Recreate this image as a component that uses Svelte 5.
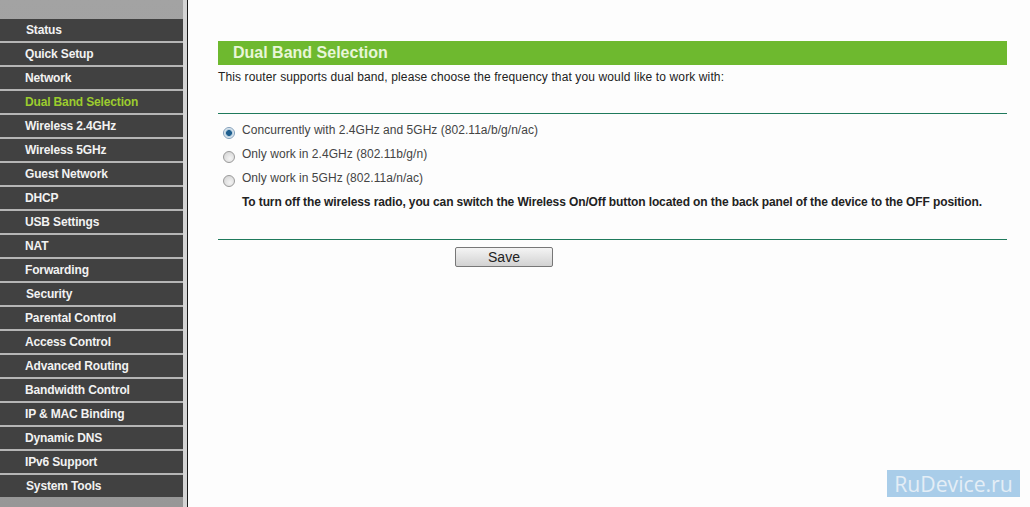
<script lang="ts">
  const menu = [
    { label: 'Status', inset: 26 },
    { label: 'Quick Setup' },
    { label: 'Network' },
    { label: 'Dual Band Selection', active: true },
    { label: 'Wireless 2.4GHz' },
    { label: 'Wireless 5GHz' },
    { label: 'Guest Network' },
    { label: 'DHCP' },
    { label: 'USB Settings' },
    { label: 'NAT' },
    { label: 'Forwarding' },
    { label: 'Security', inset: 26 },
    { label: 'Parental Control' },
    { label: 'Access Control' },
    { label: 'Advanced Routing' },
    { label: 'Bandwidth Control' },
    { label: 'IP & MAC Binding' },
    { label: 'Dynamic DNS' },
    { label: 'IPv6 Support' },
    { label: 'System Tools', inset: 26 }
  ]

  const bands = [
    { label: 'Concurrently with 2.4GHz and 5GHz (802.11a/b/g/n/ac)', checked: true },
    { label: 'Only work in 2.4GHz (802.11b/g/n)', checked: false },
    { label: 'Only work in 5GHz (802.11a/n/ac)', checked: false }
  ]
</script>

<div class="page">
  <nav class="sidebar">
    <ul>
      {#each menu as item}
        <li class:active={item.active} class:inset={item.inset}>{item.label}</li>
      {/each}
    </ul>
  </nav>

  <main class="content">
    <h1>Dual Band Selection</h1>
    <p class="intro">This router supports dual band, please choose the frequency that you would like to work with:</p>
    <hr class="rule-top" />
    <div class="options">
      {#each bands as band}
        <div class="option">
          <span class="radio" class:checked={band.checked}></span>
          <span>{band.label}</span>
        </div>
      {/each}
      <p class="note">To turn off the wireless radio, you can switch the Wireless On/Off button located on the back panel of the device to the OFF position.</p>
    </div>
    <hr class="rule-bottom" />
    <button class="save">Save</button>
  </main>

  <div class="watermark">RuDevice.ru</div>
</div>

<style>
  :global(body) {
    margin: 0;
    background: #fdfdfd;
  }

  .page {
    position: relative;
    display: flex;
    height: 507px;
    overflow: hidden;
    font-family: "Liberation Sans", Arial, sans-serif;
  }

  .sidebar {
    width: 187px;
    flex-shrink: 0;
    box-sizing: border-box;
    padding-top: 19px;
    background: linear-gradient(#a3a3a3, #979797);
    border-right: 4px solid #d4d4d4;
    box-shadow: 1px 0 0 #1a1a1a;
  }

  ul {
    list-style: none;
    margin: 0;
    padding: 0;
  }

  li {
    height: 22px;
    line-height: 22px;
    margin-bottom: 2px;
    padding-left: 25px;
    background: #414141;
    color: #f2f2f2;
    font-size: 12px;
    font-weight: bold;
    letter-spacing: -0.15px;
    box-shadow: 0 1px 0 #b5b5b5, 0 2px 0 #b5b5b5;
  }

  li.inset { padding-left: 26px; }
  li.active { color: #9ccc2e; }
  li:last-child { box-shadow: none; }

  .content {
    flex: 1;
    padding: 41px 23px 0 31px;
    font-size: 12px;
    color: #333;
  }

  h1 {
    margin: 0;
    height: 24px;
    line-height: 24px;
    padding-left: 15px;
    background: #6eb92f;
    color: #e8f6d8;
    font-size: 16px;
    font-weight: bold;
  }

  .intro {
    margin: 5px 0 0;
    line-height: 14px;
    color: #222;
    letter-spacing: 0.12px;
  }

  hr {
    height: 1px;
    margin: 0;
    border: 0;
    background: #1f7a5c;
  }

  .rule-top { margin-top: 29px; }

  .options { padding-top: 4px; }

  .option {
    display: flex;
    align-items: center;
    height: 24px;
    color: #444;
    letter-spacing: 0.04px;
  }

  .radio {
    position: relative;
    width: 12px;
    height: 12px;
    box-sizing: border-box;
    margin: 5px 7px 0 5px;
    border: 1px solid #9a9a9a;
    border-radius: 50%;
    background: radial-gradient(circle at 60% 65%, #f4f4f4, #cfcfcf);
  }

  .radio.checked {
    border-color: #7f9db9;
    background: radial-gradient(circle, #1f5f8f 0 2.6px, #a9c6da 3.2px, #f0f4f7 5px);
  }

  .note {
    margin: 0;
    padding-left: 24px;
    line-height: 24px;
    font-weight: bold;
    color: #222;
    letter-spacing: -0.113px;
  }

  .rule-bottom { margin-top: 25px; }

  .save {
    display: block;
    width: 98px;
    height: 20px;
    margin: 7px 0 0 237px;
    padding: 0;
    border: 1px solid #777;
    border-radius: 2px;
    background: linear-gradient(#f4f4f4, #d2d2d2);
    color: #222;
    font-family: inherit;
    font-size: 14px;
  }

  .watermark {
    position: absolute;
    left: 887px;
    top: 470px;
    width: 133px;
    height: 27px;
    background: #a9cde9;
    color: #e4eef6;
    font-family: "Open Sans", sans-serif;
    font-size: 21.2px;
    line-height: 27px;
    text-align: center;
  }
</style>
